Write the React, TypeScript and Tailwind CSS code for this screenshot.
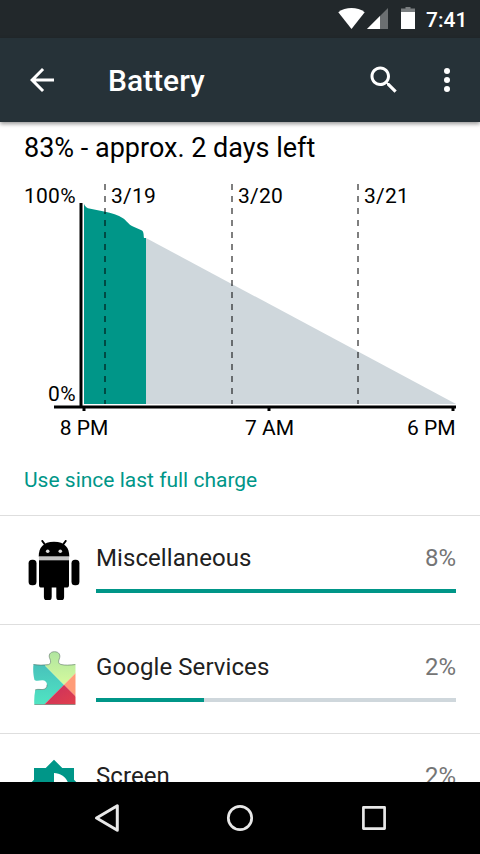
import React from 'react';

type Usage = { name: string; percent: string; fill: string; icon: React.ReactNode };

const RobotIcon = () => (
  <svg className="h-[60px] w-[60px]" viewBox="24 540 60 60">
    <path d="M38.700 556.500H69.300C69.300 548 65 541.800 54 541.800S38.700 548 38.700 556.500Z" fill="#000" />
    <path d="M42.300 541l3.600 4.800M65.700 541l-3.600 4.800" stroke="#000" strokeWidth="2" strokeLinecap="round" />
    <rect x="39" y="556.800" width="30" height="3.400" fill="#c4c4c4" />
    <circle cx="47.700" cy="551.200" r="1.800" fill="#ddd" />
    <circle cx="60.300" cy="551.200" r="1.800" fill="#ddd" />
    <path d="M39 560.300H69V585a2.600 2.600 0 0 1-2.600 2.600H41.600A2.600 2.600 0 0 1 39 585Z" />
    <rect x="28.600" y="559.700" width="7.900" height="25.600" rx="3.500" />
    <rect x="71.500" y="559.700" width="7.900" height="25.600" rx="3.500" />
    <rect x="43.900" y="580" width="7.800" height="20.600" rx="3.700" />
    <rect x="56.300" y="580" width="7.800" height="20.600" rx="3.700" />
  </svg>
);

const PuzzleIcon = () => (
  <svg className="h-[60px] w-[60px]" viewBox="24 649 60 60">
    <defs>
      <clipPath id="piece">
        <path d="M33.500 664.300C38 665.300 43 665.300 48.500 664.600C51 664 51 661.500 50 659C48 655 50 651.700 54.500 651.700S61 655 59.200 659C58 662 58.500 664 61 664.500C65 665.400 70 665.300 75.500 664.300V704.600H34.300C34 699.500 34.300 694.700 35.300 690C37.700 688.700 40.300 689.800 43 689.500C46 689 47.200 687.200 47 684.600C46.800 681.900 45 680.200 42.100 680.300C39.600 680.400 37.100 681.700 34.500 680C33.300 675.200 32.800 669.500 33.500 664.300Z" />
      </clipPath>
      <linearGradient id="teal" x1="0" y1="0" x2="0" y2="1">
        <stop offset="0" stopColor="#45b5b9" />
        <stop offset="1" stopColor="#50e5c2" />
      </linearGradient>
      <linearGradient id="lime" x1="0" y1="0" x2="0" y2="1">
        <stop offset="0" stopColor="#aee4a0" />
        <stop offset="1" stopColor="#d5fa9d" />
      </linearGradient>
      <linearGradient id="red" x1="0" y1="0" x2="1" y2="1">
        <stop offset="0" stopColor="#c82f60" />
        <stop offset="1" stopColor="#e2404b" />
      </linearGradient>
    </defs>
    <g clipPath="url(#piece)">
      <path d="M30 650H45.400V666L64 684.700 43.800 705H30Z" fill="url(#teal)" />
      <path d="M45.400 666V650H76V672.700L64 684.700Z" fill="url(#lime)" />
      <path d="M76 672.700V696.700L64 684.700Z" fill="#ff9c78" />
      <path d="M64 684.700L76 696.700V705H43.800Z" fill="url(#red)" />
    </g>
    <path d="M33.500 664.500C38 665.300 43 665.300 48.500 664.600C51 664 51 661.500 50 659C48 655 50 651.700 54.500 651.700S61 655 59.200 659C58 662 58.500 664 61 664.500C65 665.400 70 665.300 75.300 664.500M35 690C37.700 688.700 40.300 689.800 43 689.500C46 689 47.200 687.200 47 684.600M34.400 704.500H75.300" fill="none" stroke="#5d7466" strokeOpacity=".75" strokeWidth=".8" />
  </svg>
);

const BrightnessIcon = () => (
  <svg className="h-[60px] w-[60px]" viewBox="0 0 24 24" fill="#009688">
    <path d="M20 15.310L23.310 12 20 8.690V4h-4.690L12 .69 8.690 4H4v4.690L.69 12 4 15.310V20h4.690L12 23.310 15.310 20H20v-4.690zM12 18V6c3.310 0 6 2.690 6 6s-2.690 6-6 6z" />
  </svg>
);

const usages: Usage[] = [
  { name: 'Miscellaneous', percent: '8%', fill: 'w-full', icon: <RobotIcon /> },
  { name: 'Google Services', percent: '2%', fill: 'w-[108px]', icon: <PuzzleIcon /> },
  { name: 'Screen', percent: '2%', fill: 'w-[90px]', icon: <BrightnessIcon /> },
];

const StatusBar = () => (
  <div className="flex h-[38px] shrink-0 items-start bg-[#22282b] pl-[338px] text-white">
    <svg className="mt-[7px] h-[22px] w-[78px]" viewBox="338 7 78 22">
      <path d="M338.300 12.200C345.500 6.600 357.500 6.600 364.700 12.200L351.500 29Z" fill="#fff" />
      <path d="M388 8V29H367Z" fill="#6b6f71" />
      <path d="M380 16V29H367Z" fill="#fff" />
      <path d="M401 12V8.500H405.500V7H410.500V8.500H415V12Z" fill="#7a7e80" />
      <path d="M401 12H415V29H401Z" fill="#fff" />
    </svg>
    <span className="ml-[10px] mt-[6px] text-[21px] font-medium leading-7">7:41</span>
  </div>
);

const Toolbar = () => (
  <header className="relative z-10 flex h-[84px] shrink-0 items-center bg-[#263238] pl-6 pr-[15px] text-white shadow-[0_2px_4px_rgba(0,0,0,0.4)]">
    <svg className="h-9 w-9" viewBox="0 0 24 24" fill="#fff">
      <path d="M20 11H7.830l5.590-5.590L12 4l-8 8 8 8 1.410-1.410L7.830 13H20v-2z" />
    </svg>
    <h1 className="ml-12 flex-1 pt-[2px] text-[30px] font-medium leading-9">Battery</h1>
    <svg className="mr-[27px] h-9 w-9" viewBox="0 0 24 24" fill="#fff">
      <path d="M15.500 14h-.79l-.28-.27C15.410 12.590 16 11.110 16 9.500 16 5.910 13.090 3 9.500 3S3 5.910 3 9.500 5.910 16 9.500 16c1.610 0 3.090-.59 4.230-1.570l.27.28v.79l5 4.990L20.490 19l-4.990-5zm-6 0C7.010 14 5 11.990 5 9.500S7.010 5 9.500 5 14 7.010 14 9.500 11.990 14 9.500 14z" />
    </svg>
    <svg className="h-9 w-9" viewBox="0 0 24 24" fill="#fff">
      <circle cx="12" cy="6" r="2" />
      <circle cx="12" cy="12" r="2" />
      <circle cx="12" cy="18" r="2" />
    </svg>
  </header>
);

const BatteryChart = () => (
  <svg className="h-[270px] w-[480px] shrink-0" viewBox="0 170 480 270" fontSize="21">
    <path d="M146 238L456 404H146Z" fill="#cfd7dc" />
    <path d="M84 204C85 206 86 207.500 88 208.200L104 211.500C112 213 118 215 123 218.300C127 221 129 225 133 226.500L141.500 230.200C144 231.500 143.500 235 144 238H146V404H84Z" fill="#009688" />
    <path d="M105 184V404M232 184V404M358 184V404" stroke="#000" strokeOpacity=".5" strokeWidth="2" strokeDasharray="6 6" />
    <path d="M81 203V405.500M54 407H456M84 408V411M269 408V411M453 408V411" stroke="#000" strokeWidth="3" />
    <text x="75.800" y="203" textAnchor="end" letterSpacing=".25">100%</text>
    <text x="75.800" y="401" textAnchor="end" letterSpacing=".25">0%</text>
    <text x="111" y="203" letterSpacing=".25">3/19</text>
    <text x="238" y="203" letterSpacing=".25">3/20</text>
    <text x="364" y="203" letterSpacing=".25">3/21</text>
    <text x="84" y="435" textAnchor="middle">8 PM</text>
    <text x="269.500" y="435" textAnchor="middle">7 AM</text>
    <text x="455.500" y="435" textAnchor="end">6 PM</text>
  </svg>
);

const UsageRow = ({ name, percent, fill, icon }: Usage) => (
  <li className="flex h-[109px] shrink-0 border-t border-[#dedede] pl-6 pr-6 pt-6">
    {icon}
    <div className="ml-3 flex-1">
      <div className="flex justify-between text-[24px] leading-[36px]">
        <span className="tracking-[0.08px] text-[#212121]">{name}</span>
        <span className="text-[#757575]">{percent}</span>
      </div>
      <div className="mt-[13px] h-1 bg-[#cfd7dc]">
        <div className={`h-1 bg-[#009688] ${fill}`} />
      </div>
    </div>
  </li>
);

const NavBar = () => (
  <nav className="flex h-[72px] shrink-0 items-center justify-center gap-[98px] bg-black">
    <svg className="h-9 w-9" viewBox="0 0 36 36" fill="none" stroke="#e8e8e8" strokeWidth="3" strokeLinejoin="round">
      <path d="M29.300 5.800V30.200L8.500 18Z" />
    </svg>
    <svg className="h-9 w-9" viewBox="0 0 36 36" fill="none" stroke="#e8e8e8" strokeWidth="2.700">
      <circle cx="18" cy="18" r="11.700" />
    </svg>
    <svg className="h-9 w-9" viewBox="0 0 36 36" fill="none" stroke="#e8e8e8" strokeWidth="2.700" strokeLinejoin="round">
      <path d="M7.400 7.400H28.600V28.600H7.400Z" />
    </svg>
  </nav>
);

export default function App() {
  return (
    <div className="flex h-[854px] w-[480px] flex-col overflow-hidden bg-white font-['Roboto',sans-serif] text-black">
      <StatusBar />
      <Toolbar />
      <main className="flex min-h-0 flex-1 flex-col overflow-hidden bg-white">
        <div className="h-12 shrink-0 pl-6 pt-2 text-[27px] leading-9">83% - approx. 2 days left</div>
        <BatteryChart />
        <div className="h-[75px] shrink-0 pl-6 pt-[25px] text-[21px] leading-[30px] text-[#009688]">
          Use since last full charge
        </div>
        <ul>
          {usages.map((usage) => (
            <UsageRow key={usage.name} {...usage} />
          ))}
        </ul>
      </main>
      <NavBar />
    </div>
  );
}
